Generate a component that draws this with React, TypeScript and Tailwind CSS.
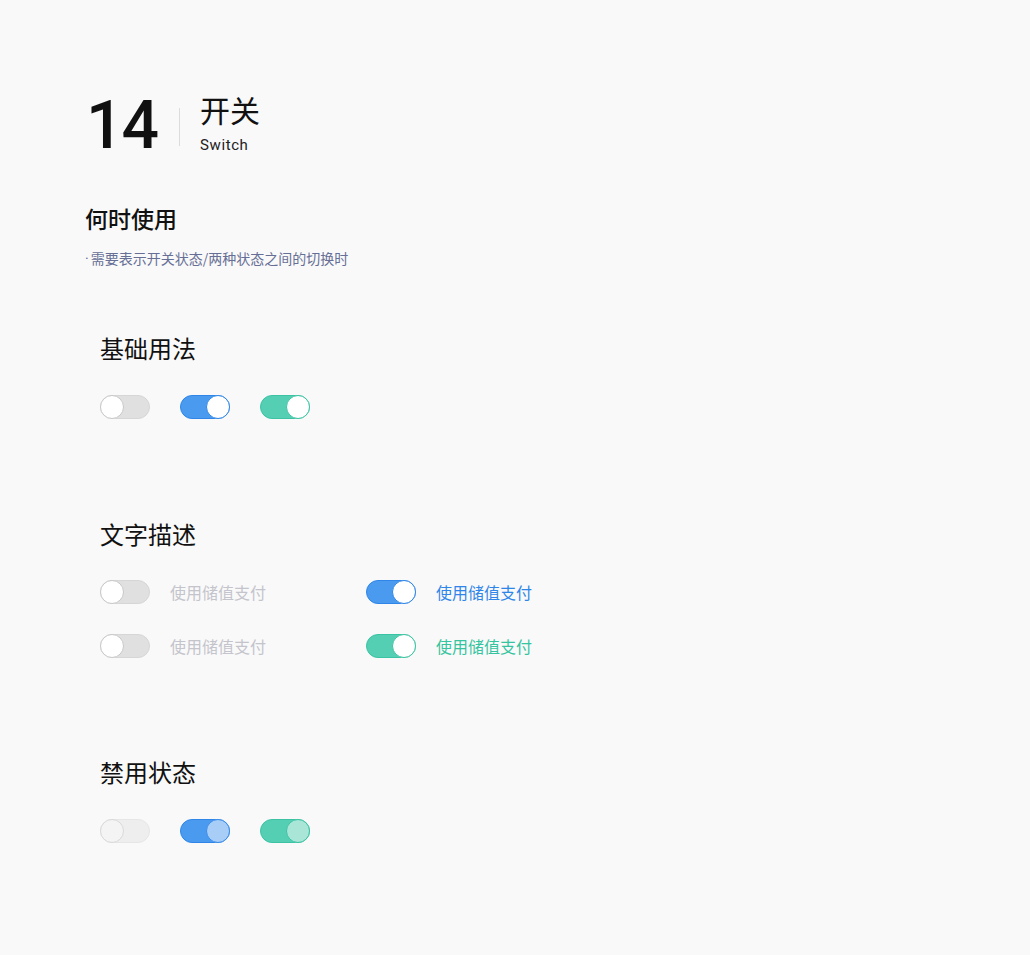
import { ReactNode } from "react";

type Tone = "off" | "blue" | "green";

const track: Record<Tone, string> = {
  off: "bg-[#e0e0e0] border-[#d6d6d6]",
  blue: "bg-[#4a9af0] border-[#2f86e8]",
  green: "bg-[#55cfb3] border-[#3cc3a3]",
};

const knob: Record<Tone, string> = {
  off: "border-[#c8c8c8]",
  blue: "border-[#2f86e8]",
  green: "border-[#3cc3a3]",
};

const disabledKnob: Record<Tone, string> = {
  off: "bg-[#f4f4f4] border-[#d9d9d9]",
  blue: "bg-[#a8cdf7] border-[#3a8dea]",
  green: "bg-[#a9e6d8] border-[#3cc3a3]",
};

const Switch = ({ tone, disabled = false }: { tone: Tone; disabled?: boolean }) => {
  const on = tone !== "off";
  const trackCls = disabled && !on ? "bg-[#eeeeee] border-[#e6e6e6]" : track[tone];
  const knobCls = disabled ? disabledKnob[tone] : `bg-white ${knob[tone]}`;
  return (
    <div className={`flex h-6 w-[50px] rounded-full border ${trackCls} ${on ? "justify-end" : "justify-start"}`}>
      <div className={`-m-px h-6 w-6 rounded-full border ${knobCls}`} />
    </div>
  );
};

const Section = ({ title, children }: { title: string; children: ReactNode }) => (
  <div className="pl-[100px]">
    <h3 className="text-[24px] leading-[32px] text-[#111]">{title}</h3>
    {children}
  </div>
);

const Labeled = ({ tone, label }: { tone: Tone; label: string }) => {
  const color = tone === "off" ? "text-[#c4c4cc]" : tone === "blue" ? "text-[#2f86e8]" : "text-[#35c49f]";
  return (
    <div className="flex w-[266px] items-center gap-5">
      <Switch tone={tone} />
      <span className={`text-[16px] ${color}`}>{label}</span>
    </div>
  );
};

export default function App() {
  return (
    <div
      className="min-h-[955px] bg-[#f9f9f9]"
      style={{ fontFamily: '"Noto Sans CJK SC", "Noto Sans", sans-serif' }}
    >
      <header className="flex items-start pl-[86px] pt-[86px]">
        <span className="font-['Roboto',sans-serif] text-[66px] font-medium leading-[80px] tracking-[-2px] text-[#111]">14</span>
        <div className="ml-[22px] mt-[22px] h-[38px] w-px bg-[#dcdcdc]" />
        <div className="ml-[20px] mt-[6px] flex flex-col">
          <span className="text-[30px] leading-[34px] text-[#111]">开关</span>
          <span className="mt-[10px] font-['Roboto',sans-serif] text-[15px] leading-[18px] tracking-[0.6px] text-[#222]">Switch</span>
        </div>
      </header>

      <div className="mt-[36px] pl-[85px]">
        <h2 className="text-[23px] font-medium leading-[32px] text-[#111]">何时使用</h2>
        <p className="mt-[15px] text-[14px] leading-[18px] text-[#676f96]">
          <span className="mr-[2px] font-['Roboto',sans-serif]">·</span>需要表示开关状态/两种状态之间的切换时
        </p>
      </div>

      <div className="mt-[64px]">
        <Section title="基础用法">
          <div className="mt-[31px] flex gap-[30px]">
            <Switch tone="off" />
            <Switch tone="blue" />
            <Switch tone="green" />
          </div>
        </Section>
      </div>

      <div className="mt-[99px]">
        <Section title="文字描述">
          <div className="mt-[30px] flex flex-col gap-[30px]">
            <div className="flex">
              <Labeled tone="off" label="使用储值支付" />
              <Labeled tone="blue" label="使用储值支付" />
            </div>
            <div className="flex">
              <Labeled tone="off" label="使用储值支付" />
              <Labeled tone="green" label="使用储值支付" />
            </div>
          </div>
        </Section>
      </div>

      <div className="mt-[98px]">
        <Section title="禁用状态">
          <div className="mt-[31px] flex gap-[30px]">
            <Switch tone="off" disabled />
            <Switch tone="blue" disabled />
            <Switch tone="green" disabled />
          </div>
        </Section>
      </div>
    </div>
  );
}
